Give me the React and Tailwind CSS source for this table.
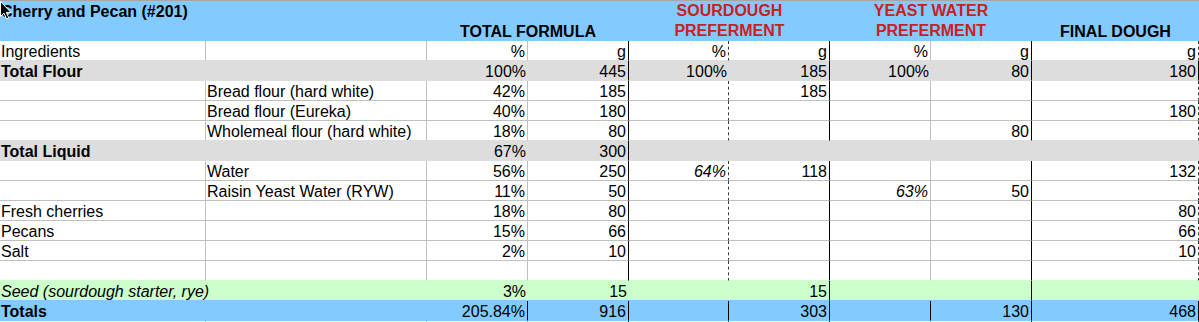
import React from 'react';

const GRID = 'grid grid-cols-[206px_221px_101px_101px_100px_101px_101px_101px_167px]';

const RIGHT = {
  l: 'border-r border-r-[#c0c0c0]',
  b: 'border-r border-r-black',
  d: 'border-r border-r-[#3a3a3a] [border-right-style:dashed]',
  n: '',
};

const FILL = {
  white: '',
  grey: 'bg-[#dddddd]',
  green: 'bg-[#ccffcc]',
  blue: 'bg-[#83caff]',
};

const BOTTOM = {
  white: 'border-b border-b-[#c0c0c0]',
  grey: 'border-b border-b-[#dddddd]',
  green: 'border-b border-b-[#ccffcc]',
  blue: 'border-b border-b-[#83caff]',
};

const STD = ['l', 'l', 'l', 'b', 'd', 'b', 'l', 'b', 'd'];

// cells: A..I. numbers are right aligned, text in A and B left aligned
const rows = [
  { cells: ['Ingredients', '', '%', 'g', '%', 'g', '%', 'g', 'g'], lines: STD },
  { fill: 'grey', bold: true, cells: ['Total Flour', '', '100%', '445', '100%', '185', '100%', '80', '180'], lines: ['n', 'n', 'n', 'b', 'n', 'b', 'n', 'b', 'b'] },
  { cells: ['', 'Bread flour (hard white)', '42%', '185', '', '185', '', '', ''], lines: STD },
  { cells: ['', 'Bread flour (Eureka)', '40%', '180', '', '', '', '', '180'], lines: STD },
  { cells: ['', 'Wholemeal flour (hard white)', '18%', '80', '', '', '', '80', ''], lines: STD },
  { fill: 'grey', bold: true, cells: ['Total Liquid', '', '67%', '300', '', '', '', '', ''], lines: ['n', 'n', 'n', 'b', 'n', 'n', 'n', 'n', 'n'] },
  { cells: ['', 'Water', '56%', '250', '64%', '118', '', '', '132'], lines: STD, italic: [4] },
  { cells: ['', 'Raisin Yeast Water (RYW)', '11%', '50', '', '', '63%', '50', ''], lines: STD, italic: [6] },
  { cells: ['Fresh cherries', '', '18%', '80', '', '', '', '', '80'], lines: STD },
  { cells: ['Pecans', '', '15%', '66', '', '', '', '', '66'], lines: STD },
  { cells: ['Salt', '', '2%', '10', '', '', '', '', '10'], lines: STD },
  { cells: ['', '', '', '', '', '', '', '', ''], lines: STD },
  { fill: 'green', cells: ['Seed (sourdough starter, rye)', '', '3%', '15', '', '15', '', '', ''], lines: ['n', 'n', 'n', 'n', 'n', 'b', 'n', 'b', 'n'], italic: [0] },
  { fill: 'blue', bold: true, cells: ['Totals', '', '205.84%', '916', '', '303', '', '130', '468'], lines: ['n', 'n', 'b', 'b', 'b', 'b', 'b', 'b', 'b'] },
  { cells: ['', '', '', '', '', '', '', '', ''], lines: STD },
];

function Cursor() {
  return (
    <svg className="absolute left-0 top-px" width="13" height="19" viewBox="0 0 13 19">
      <path d="M0.5 0.5 L0.5 15.5 L4 12.2 L6.6 18 L8.8 17 L6.3 11.4 L11 11.4 Z" fill="#000" stroke="#fff" strokeWidth="1" />
    </svg>
  );
}

function Header() {
  return (
    <div className={`${GRID} h-[40px] bg-[#83caff] font-bold`}>
      <div className="col-span-2 pl-px pt-px leading-[19px] whitespace-nowrap">Cherry and Pecan (#201)</div>
      <div className="col-span-2 flex flex-col justify-end items-center leading-[19px]">TOTAL FORMULA</div>
      <div className="col-span-2 flex flex-col justify-end items-center leading-[20px] text-[#c9211e]">
        <span>SOURDOUGH</span>
        <span>PREFERMENT</span>
      </div>
      <div className="col-span-2 flex flex-col justify-end items-center leading-[20px] text-[#c9211e]">
        <span>YEAST WATER</span>
        <span>PREFERMENT</span>
      </div>
      <div className="flex flex-col justify-end items-center leading-[19px]">FINAL DOUGH</div>
    </div>
  );
}

export default function App() {
  return (
    <div className="relative w-[1199px] h-[322px] overflow-hidden bg-white text-black text-[16px] font-['Liberation_Sans',Arial,sans-serif]">
      <div className="h-px bg-[#a6a6a6]" />
      <Header />
      {rows.map((row, r) => {
        const fill = row.fill || 'white';
        const next = rows[r + 1]?.fill;
        const bottom = next ? BOTTOM[next] : BOTTOM[fill];
        return (
          <div key={r} className={`${GRID} h-[20px] ${FILL[fill]}`}>
            {row.cells.map((text, c) => {
              const left = c < 2;
              const italic = row.italic?.includes(c);
              const bold = row.bold && c === 0;
              return (
                <div
                  key={c}
                  className={`h-[20px] leading-[22px] whitespace-nowrap ${bottom} ${RIGHT[row.lines[c]]} ${left ? 'pl-px text-left' : 'pr-[2px] text-right'} ${italic ? 'italic' : ''} ${bold ? 'font-bold' : ''}`}
                >
                  {text}
                </div>
              );
            })}
          </div>
        );
      })}
      <Cursor />
    </div>
  );
}
